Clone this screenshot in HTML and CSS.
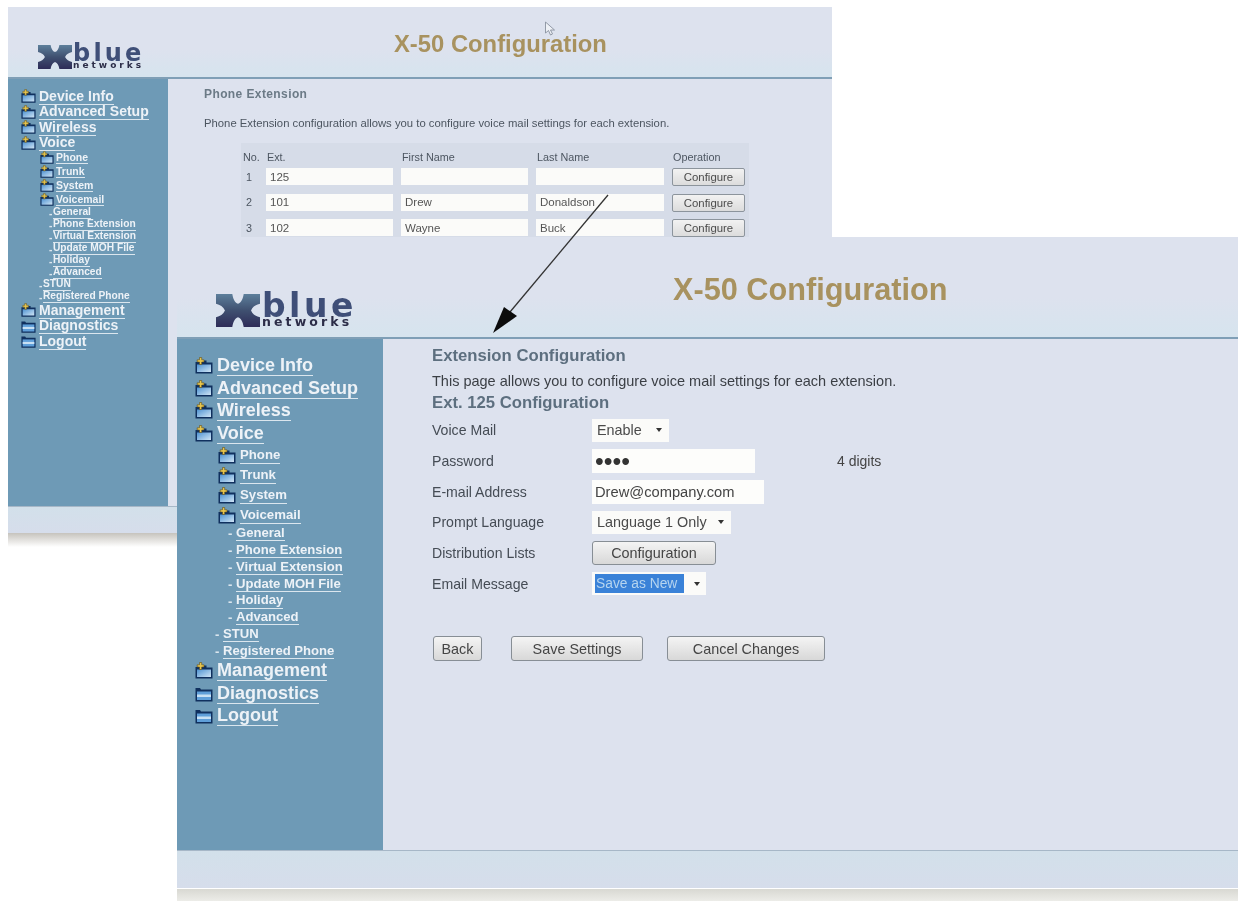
FILE: index.html
```html
<!DOCTYPE html>
<html lang="en">
<head>
<meta charset="utf-8">
<title>X-50 Configuration</title>
<link rel="stylesheet" href="styles.css">
</head>
<body>
<svg class="defs" width="0" height="0" aria-hidden="true">
  <defs>
    <linearGradient id="logo-fill" x1="0" y1="0" x2="0" y2="1">
      <stop offset="0" stop-color="#5d7f9b"/>
      <stop offset=".5" stop-color="#3f5070"/>
      <stop offset="1" stop-color="#2e2c58"/>
    </linearGradient>
    <linearGradient id="folder-fill" x1="0" y1="0" x2="1" y2="1">
      <stop offset="0" stop-color="#4f93d2"/>
      <stop offset="1" stop-color="#cfe4f4"/>
    </linearGradient>
  </defs>
  <symbol id="folder-plus" viewBox="0 0 18 18">
    <path d="M.5 5h4l1-1.500h6V5.500h6v11H.5z" fill="#10305e"/>
    <path d="M2 7.500h14v7.500H2z" fill="url(#folder-fill)"/>
    <path d="M4.500 .5h2.200v2.300H9V5H6.700v2.500H4.500V5H2.200V2.800h2.300z" fill="#e8c64e" stroke="#5f4f1c" stroke-width=".6"/>
  </symbol>
  <symbol id="folder" viewBox="0 0 18 18">
    <path d="M.5 3h4.500l1 1.500h11.500v12H.5z" fill="#10305e"/>
    <path d="M2 6.500h14v8.500H2z" fill="#5f9fd9"/>
    <path d="M2 9.500h14v2.500H2z" fill="#c8e0f3"/>
  </symbol>
  <symbol id="x-mark" viewBox="0 0 54 34" preserveAspectRatio="none">
    <path d="M0 0h20c1 5 3 9 7 10 4-1 6-5 7-10h20v10c-5 1-9 3-11 7 2 4 6 6 11 7v10H34c-1-5-3-9-7-10-4 1-6 5-7 10H0V24c5-1 9-3 11-7-2-4-6-6-11-7z"/>
  </symbol>
</svg>

<section class="win win-back">
  <header class="win-head">
    <div class="logo">
      <svg class="logo-x"><use href="#x-mark" fill="url(#logo-fill)"/></svg>
      <div class="logo-words"><span class="logo-blue">blue</span><span class="logo-net">networks</span></div>
    </div>
    <h1 class="win-title">X-50 Configuration</h1>
  </header>
  <div class="win-body">
    <nav class="menu">
      <a class="top" href="#"><svg class="ico"><use href="#folder-plus"/></svg><span>Device Info</span></a>
      <a class="top" href="#"><svg class="ico"><use href="#folder-plus"/></svg><span>Advanced Setup</span></a>
      <a class="top" href="#"><svg class="ico"><use href="#folder-plus"/></svg><span>Wireless</span></a>
      <a class="top" href="#"><svg class="ico"><use href="#folder-plus"/></svg><span>Voice</span></a>
      <a class="sub" href="#"><svg class="ico"><use href="#folder-plus"/></svg><span>Phone</span></a>
      <a class="sub" href="#"><svg class="ico"><use href="#folder-plus"/></svg><span>Trunk</span></a>
      <a class="sub" href="#"><svg class="ico"><use href="#folder-plus"/></svg><span>System</span></a>
      <a class="sub" href="#"><svg class="ico"><use href="#folder-plus"/></svg><span>Voicemail</span></a>
      <a class="leaf" href="#"><i>-</i><span>General</span></a>
      <a class="leaf" href="#"><i>-</i><span>Phone Extension</span></a>
      <a class="leaf" href="#"><i>-</i><span>Virtual Extension</span></a>
      <a class="leaf" href="#"><i>-</i><span>Update MOH File</span></a>
      <a class="leaf" href="#"><i>-</i><span>Holiday</span></a>
      <a class="leaf" href="#"><i>-</i><span>Advanced</span></a>
      <a class="leaf mid" href="#"><i>-</i><span>STUN</span></a>
      <a class="leaf mid" href="#"><i>-</i><span>Registered Phone</span></a>
      <a class="top" href="#"><svg class="ico"><use href="#folder-plus"/></svg><span>Management</span></a>
      <a class="top" href="#"><svg class="ico"><use href="#folder"/></svg><span>Diagnostics</span></a>
      <a class="top" href="#"><svg class="ico"><use href="#folder"/></svg><span>Logout</span></a>
    </nav>
    <main class="back-main">
      <h2 class="back-h">Phone Extension</h2>
      <p class="back-p">Phone Extension configuration allows you to configure voice mail settings for each extension.</p>
      <div class="ext-table">
        <span class="th">No.</span><span class="th">Ext.</span><span class="th">First Name</span><span class="th">Last Name</span><span class="th">Operation</span>
        <span class="num">1</span><input class="cell" value="125"><input class="cell" value=""><input class="cell" value=""><button class="conf">Configure</button>
        <span class="num">2</span><input class="cell" value="101"><input class="cell" value="Drew"><input class="cell" value="Donaldson"><button class="conf">Configure</button>
        <span class="num">3</span><input class="cell" value="102"><input class="cell" value="Wayne"><input class="cell" value="Buck"><button class="conf">Configure</button>
      </div>
    </main>
  </div>
  <footer class="win-foot"></footer>
</section>
<div class="shadow shadow-back"></div>

<section class="win win-front">
  <header class="win-head">
    <div class="logo">
      <svg class="logo-x"><use href="#x-mark" fill="url(#logo-fill)"/></svg>
      <div class="logo-words"><span class="logo-blue">blue</span><span class="logo-net">networks</span></div>
    </div>
    <h1 class="win-title">X-50 Configuration</h1>
  </header>
  <div class="win-body">
    <nav class="menu">
      <a class="top" href="#"><svg class="ico"><use href="#folder-plus"/></svg><span>Device Info</span></a>
      <a class="top" href="#"><svg class="ico"><use href="#folder-plus"/></svg><span>Advanced Setup</span></a>
      <a class="top" href="#"><svg class="ico"><use href="#folder-plus"/></svg><span>Wireless</span></a>
      <a class="top" href="#"><svg class="ico"><use href="#folder-plus"/></svg><span>Voice</span></a>
      <a class="sub" href="#"><svg class="ico"><use href="#folder-plus"/></svg><span>Phone</span></a>
      <a class="sub" href="#"><svg class="ico"><use href="#folder-plus"/></svg><span>Trunk</span></a>
      <a class="sub" href="#"><svg class="ico"><use href="#folder-plus"/></svg><span>System</span></a>
      <a class="sub" href="#"><svg class="ico"><use href="#folder-plus"/></svg><span>Voicemail</span></a>
      <a class="leaf" href="#"><i>-</i><span>General</span></a>
      <a class="leaf" href="#"><i>-</i><span>Phone Extension</span></a>
      <a class="leaf" href="#"><i>-</i><span>Virtual Extension</span></a>
      <a class="leaf" href="#"><i>-</i><span>Update MOH File</span></a>
      <a class="leaf" href="#"><i>-</i><span>Holiday</span></a>
      <a class="leaf" href="#"><i>-</i><span>Advanced</span></a>
      <a class="leaf mid" href="#"><i>-</i><span>STUN</span></a>
      <a class="leaf mid" href="#"><i>-</i><span>Registered Phone</span></a>
      <a class="top" href="#"><svg class="ico"><use href="#folder-plus"/></svg><span>Management</span></a>
      <a class="top" href="#"><svg class="ico"><use href="#folder"/></svg><span>Diagnostics</span></a>
      <a class="top" href="#"><svg class="ico"><use href="#folder"/></svg><span>Logout</span></a>
    </nav>
    <main class="front-main">
      <h2 class="front-h">Extension Configuration</h2>
      <p class="front-p">This page allows you to configure voice mail settings for each extension.</p>
      <h2 class="front-h">Ext. 125 Configuration</h2>
      <div class="form">
        <span class="lab">Voice Mail</span>
        <div class="ctl"><span class="sel sel-enable">Enable<b class="caret"></b></span></div>
        <span class="lab">Password</span>
        <div class="ctl ctl-pass"><input class="txt txt-pass" type="password" value="1234"><span class="hint">4 digits</span></div>
        <span class="lab">E-mail Address</span>
        <div class="ctl"><input class="txt txt-mail" value="Drew@company.com"></div>
        <span class="lab">Prompt Language</span>
        <div class="ctl"><span class="sel sel-lang">Language 1 Only<b class="caret"></b></span></div>
        <span class="lab">Distribution Lists</span>
        <div class="ctl"><button class="btn btn-cfg">Configuration</button></div>
        <span class="lab">Email Message</span>
        <div class="ctl"><span class="sel sel-msg"><em class="picked">Save as New</em><b class="caret"></b></span></div>
      </div>
      <div class="actions">
        <button class="btn btn-back">Back</button>
        <button class="btn btn-save">Save Settings</button>
        <button class="btn btn-cancel">Cancel Changes</button>
      </div>
    </main>
  </div>
  <footer class="win-foot"></footer>
</section>
<div class="shadow shadow-front"></div>

<svg class="arrow" viewBox="0 0 140 160" aria-hidden="true">
  <line x1="126" y1="3" x2="28" y2="120" stroke="#333" stroke-width="1.300"/>
  <path d="M11 141l11-26 13 9z" fill="#0c0c0c"/>
</svg>
<svg class="cursor" viewBox="0 0 12 16" aria-hidden="true">
  <path d="M1.500 1v11l3-2.500 2 4.500 2-1-2-4h4z" fill="#eef1f6" stroke="#7d8794" stroke-width=".8"/>
</svg>
</body>
</html>
```
FILE: styles.css
```css
* { box-sizing: border-box; }
html, body { margin: 0; height: 100%; }
body {
  position: relative;
  width: 1240px;
  height: 901px;
  overflow: hidden;
  background: #fff;
  font-family: "Liberation Sans", Arial, sans-serif;
  color: #333;
}
.defs { position: absolute; }

.win {
  position: absolute;
  display: flex;
  flex-direction: column;
  overflow: hidden;
  background: #dde2ee;
}
.win-back {
  left: 8px; top: 7px; width: 824px; height: 526px;
  filter: blur(.55px);
  --head-h: 72px;
  --side-w: 160px;
  --foot-h: 27px;
  --title: 23.800px;
  --title-pl: 386px;
  --logo-pl: 30px;
  --top-fs: 14px; --top-h: 15.5px; --top-gap: 3px; --ico-top: 15px;
  --sub-fs: 10.500px; --sub-h: 14px; --sub-pl: 19px; --sub-pt: 0px; --ico-sub: 14px; --sub-gap: 2px;
  --leaf-fs: 10.200px; --leaf-h: 12px; --leaf-pl: 28px; --dash: 4px; --dash-gap: 0px;
  --mid-pl: 18px;
  --menu-pt: 10px; --menu-pl: 13px;
}
.win-front {
  left: 177px; top: 237px; width: 1061px; height: 651px;
  filter: blur(.4px);
  --head-h: 102px;
  --side-w: 206px;
  --foot-h: 38px;
  --title: 30.700px;
  --title-pl: 496px;
  --logo-pl: 39px;
  --top-fs: 18px; --top-h: 22.5px; --top-gap: 4px; --ico-top: 18px;
  --sub-fs: 13.200px; --sub-h: 20px; --sub-pl: 23px; --sub-pt: 2px; --ico-sub: 18px; --sub-gap: 4px;
  --leaf-fs: 13.100px; --leaf-h: 16.900px; --leaf-pl: 33px; --dash: 4px; --dash-gap: 4px;
  --mid-pl: 20px;
  --menu-pt: 16px; --menu-pl: 18px;
}

.win-head {
  position: relative;
  flex: none;
  height: var(--head-h);
  display: flex;
  align-items: flex-end;
  background: linear-gradient(#dde2ee 60%, #d6e4ee);
  border-bottom: 2px solid #7f9fb6;
}
.win-title {
  position: absolute;
  left: var(--title-pl);
  margin: 0;
  font-size: var(--title);
  line-height: 1;
  font-weight: 700;
  color: #a8925f;
  white-space: nowrap;
}
.win-back .win-title { top: 25px; }
.win-front .win-title { top: 38px; }

.logo {
  display: flex;
  align-items: flex-end;
  margin-left: var(--logo-pl);
}
.logo-x { display: block; }
.logo-words { display: flex; flex-direction: column; font-family: "DejaVu Sans", sans-serif; font-weight: 700; }
.logo-blue { color: #3f4f78; }
.logo-net { color: #2c2d48; }

.win-back .logo { margin-bottom: 8px; }
.win-back .logo-x { width: 34px; height: 24px; }
.win-back .logo-words { margin-left: 1px; }
.win-back .logo-blue { font-size: 24px; line-height: 17px; letter-spacing: 3.200px; }
.win-back .logo-net { font-size: 9px; line-height: 7px; letter-spacing: 3px; }
.win-front .logo { margin-bottom: 10px; }
.win-front .logo-x { width: 44px; height: 33px; }
.win-front .logo-words { margin-left: 2px; }
.win-front .logo-blue { font-size: 33px; line-height: 23px; letter-spacing: 3.500px; }
.win-front .logo-net { font-size: 12.500px; line-height: 10px; letter-spacing: 3.100px; }

.win-body { flex: 1; min-height: 0; display: flex; }
.win-foot {
  flex: none;
  height: var(--foot-h);
  background: linear-gradient(#d2e0ea, #d6ddeb);
  border-top: 1px solid #a6b7c7;
}

.menu {
  flex: none;
  width: var(--side-w);
  padding: var(--menu-pt) 0 0 var(--menu-pl);
  display: flex;
  flex-direction: column;
  background: #6e9ab6;
}
.menu a { display: flex; align-items: center; color: #edf2f7; text-decoration: none; white-space: nowrap; }
.menu a span { border-bottom: 1px solid #dbe6ee; line-height: 1; padding-bottom: 1px; }
.menu i { font-style: normal; width: var(--dash); margin-right: var(--dash-gap); color: #dbe6ee; }
.top { height: var(--top-h); font-size: var(--top-fs); font-weight: 700; gap: var(--top-gap); }
.top .ico { width: var(--ico-top); height: var(--ico-top); }
.sub { height: var(--sub-h); padding: var(--sub-pt) 0 0 var(--sub-pl); font-size: var(--sub-fs); font-weight: 700; gap: var(--sub-gap); }
.sub .ico { width: var(--ico-sub); height: var(--ico-sub); }
.leaf { height: var(--leaf-h); padding-left: var(--leaf-pl); font-size: var(--leaf-fs); font-weight: 700; color: #e2eaf1; }
.leaf.mid { padding-left: var(--mid-pl); }
.ico { flex: none; display: block; }

/* back window main */
.back-main { flex: 1; padding: 8px 0 0 36px; color: #4c5560; }
.back-h { margin: 0; font-size: 12px; line-height: 14px; font-weight: 700; color: #6b7a86; letter-spacing: .4px; }
.back-p { margin: 16px 0 0; font-size: 11.300px; line-height: 12px; }
.ext-table {
  margin: 14px 0 0 37px;
  width: 508px;
  height: 110px;
  padding: 0 4px 0 1px;
  display: grid;
  grid-template-columns: 16px 127px 127px 128px 73px;
  grid-template-rows: 16.500px repeat(3, 17px);
  column-gap: 8px;
  row-gap: 8.500px;
  align-content: start;
  background: #d6dce8;
}
.th { align-self: end; margin-bottom: -3px; padding-left: 1px; font-size: 10.800px; white-space: nowrap; color: #4c5560; }
.num { align-self: center; padding-left: 4px; font-size: 10.800px; color: #4c5560; }
.cell {
  width: 100%; height: 17px; padding: 0 4px; border: 0;
  background: #fbfbf9;
  font: 11.500px "Liberation Sans", Arial, sans-serif;
  color: #555;
}
.conf {
  height: 18px; padding: 0; width: 73px;
  font: 11.400px "Liberation Sans", Arial, sans-serif;
  color: #4c4c4c;
  background: linear-gradient(#f2f2f2, #dcdcdc);
  border: 1px solid #8c949c;
  border-radius: 2px;
}

/* front window main */
.front-main { flex: 1; padding: 8px 0 0 49px; }
.front-h { margin: 0; font-size: 16.700px; line-height: 18px; font-weight: 700; color: #5d6f7f; }
.front-p { margin: 8px 0 4px; font-size: 14.500px; line-height: 17px; color: #3b3f45; }
.form {
  margin-top: 3px;
  display: grid;
  grid-template-columns: 160px 1fr;
  grid-auto-rows: 30.7px;
  align-items: center;
}
.lab { font-size: 14.100px; color: #454c55; }
.ctl { display: flex; align-items: center; }
.txt {
  height: 24px; padding: 0 3px; border: 0;
  background: #fdfdfb;
  font: 14.700px "Liberation Sans", Arial, sans-serif;
  color: #444;
}
.txt-pass { width: 163px; font-size: 25px; color: #333; }
.txt-mail { width: 172px; }
.hint { margin-left: 82px; font-size: 14px; color: #444; }
.sel {
  display: flex; align-items: center; justify-content: space-between;
  height: 23px; padding: 0 7px 0 5px;
  background: #fbfbf9;
  font-size: 14.400px;
  color: #4b4b4b;
  white-space: nowrap;
}
.sel-enable { width: 77px; }
.sel-lang { width: 139px; }
.sel-msg { width: 114px; padding: 0 6px 0 3px; }
.picked { font-style: normal; background: #3a82d8; color: #b5d4ef; padding: 2px 1px; font-size: 13.800px; width: 89px; white-space: nowrap; }
.caret { width: 0; height: 0; border: 3.500px solid transparent; border-top: 4px solid #333; border-bottom: 0; }
.btn {
  height: 24px; padding: 0;
  font: 14.400px "Liberation Sans", Arial, sans-serif;
  color: #454545;
  background: linear-gradient(#f4f4f4, #d8d8d8);
  border: 1px solid #878e95;
  border-radius: 3px;
}
.btn-cfg { width: 124px; }
.actions { display: flex; margin: 37px 0 0 1px; }
.btn-back { width: 49px; height: 25px; }
.btn-save { width: 132px; height: 25px; margin-left: 29px; }
.btn-cancel { width: 158px; height: 25px; margin-left: 24px; }

/* shadows under the windows */
.shadow { position: absolute; }
.shadow-back { left: 8px; top: 533px; width: 169px; height: 14px; background: linear-gradient(#c6c3bd, #fff); }
.shadow-front { left: 177px; top: 889px; width: 1061px; height: 12px; background: linear-gradient(#d8d8d2, #ecece8); }

.arrow { position: absolute; left: 482px; top: 192px; width: 140px; height: 160px; }
.cursor { position: absolute; left: 544px; top: 21px; width: 12px; height: 16px; }
```
